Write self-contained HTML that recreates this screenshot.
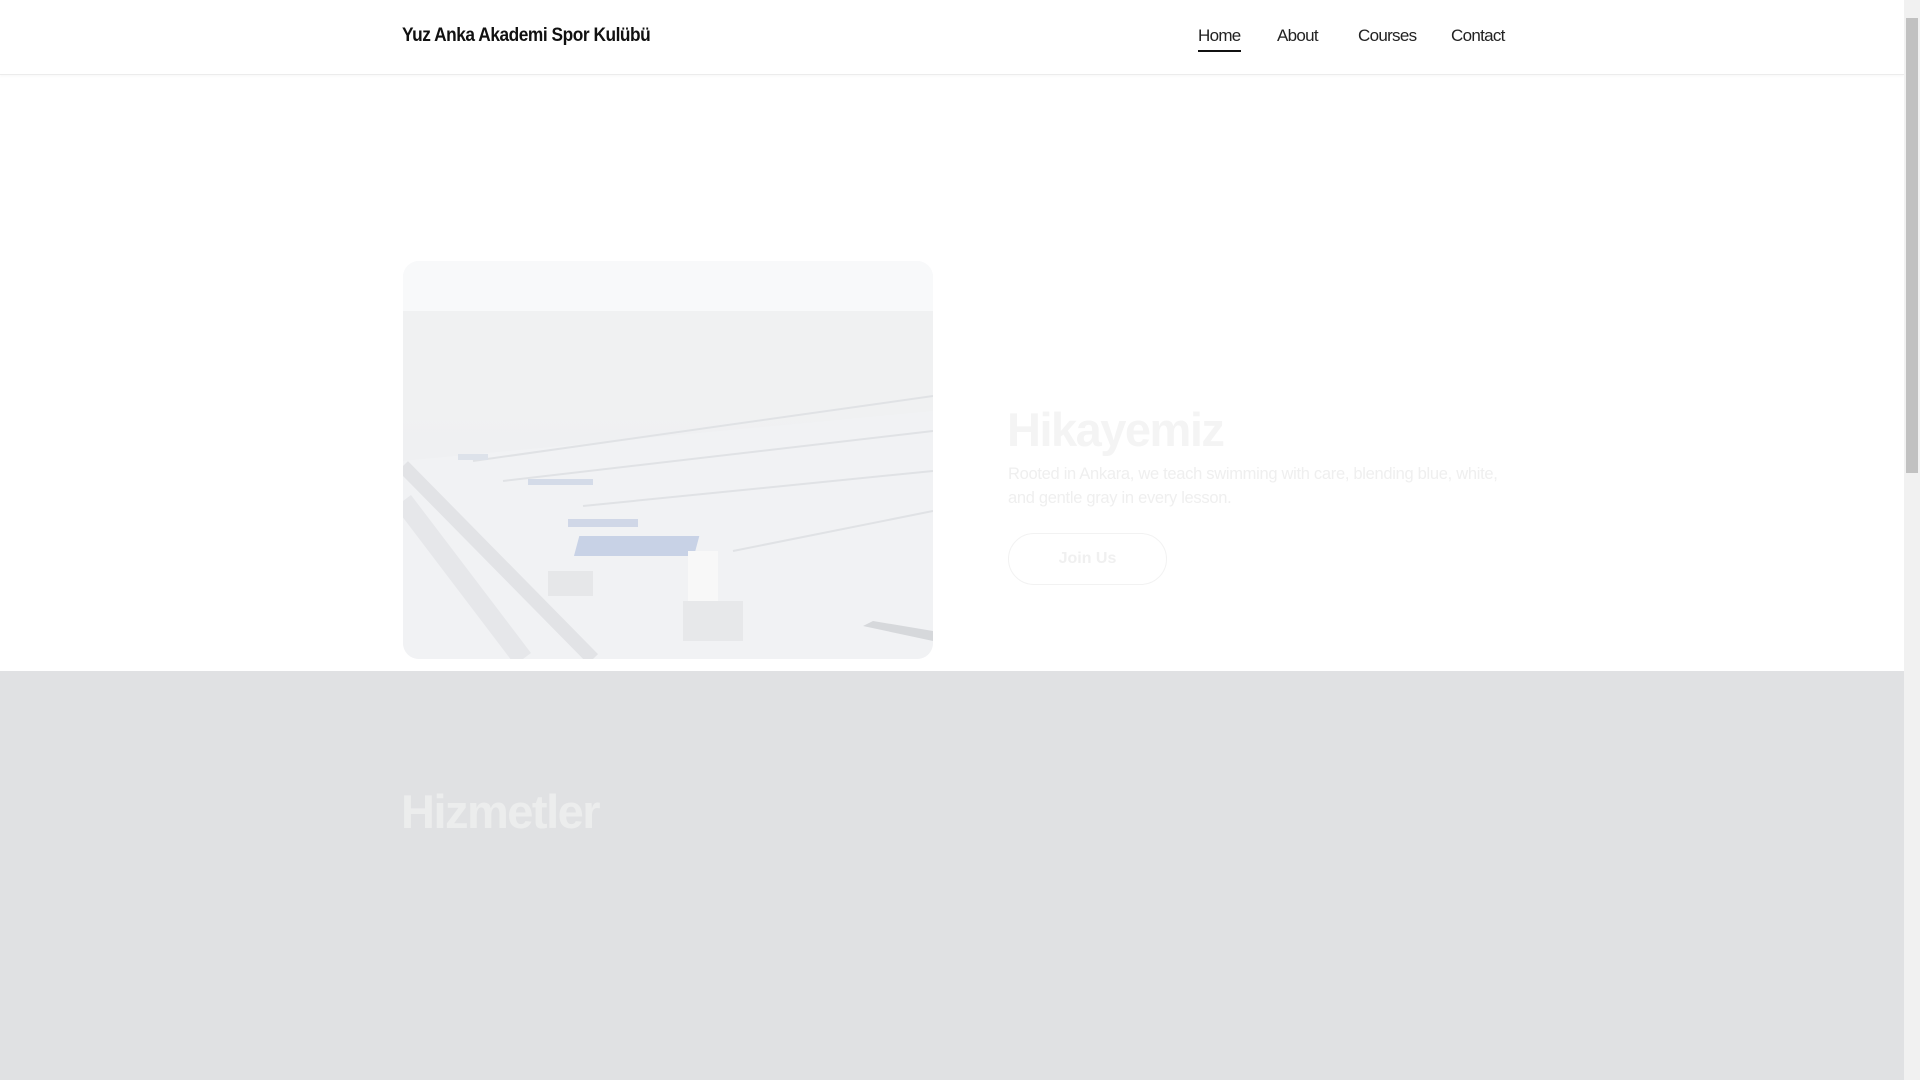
<!DOCTYPE html>
<html><head><meta charset="utf-8"><style>
*{margin:0;padding:0;box-sizing:border-box}
html,body{width:1920px;height:1080px;overflow:hidden;background:#fff;font-family:"Liberation Sans",sans-serif}
.hdr{position:absolute;left:0;top:0;width:1904px;height:75px;background:#fff;border-bottom:1px solid #ececec;box-shadow:0 1px 3px rgba(0,0,0,.04)}
.logo{position:absolute;left:402px;top:25px;font-size:19px;color:#111;letter-spacing:-0.5px;font-weight:bold;transform:scaleX(.91);transform-origin:left}
.nav a{position:absolute;top:26px;font-size:17px;color:#222;text-decoration:none;letter-spacing:-0.7px}
.home{border-bottom:2px solid #111;padding-bottom:4px}
.gray{position:absolute;left:0;top:671px;width:1904px;height:409px;background:#e0e1e3}
.img{position:absolute;left:403px;top:261px;width:530px;height:398px;border-radius:16px;overflow:hidden;background:linear-gradient(180deg,#f6f7f8 0%,#eff0f2 45%,#f2f3f5 100%)}
h2{position:absolute;font-size:47px;font-weight:bold;color:#f4f4f4;letter-spacing:-1.5px}
.p{position:absolute;left:1008px;top:462px;width:510px;font-size:16.5px;line-height:24px;color:#efefef;letter-spacing:-0.3px}
.btn{position:absolute;left:1008px;top:533px;width:159px;height:52px;border:1px solid #f2f2f2;border-radius:26px;text-align:center;line-height:50px;font-size:16px;font-weight:bold;color:#f0f0f0}
.sb{position:absolute;left:1904px;top:0;width:16px;height:1080px;background:#f1f1f1}
.th{position:absolute;left:1906px;top:18px;width:12px;height:455px;background:#c1c1c1}
</style></head><body>
<div class="hdr">
<div class="logo">Yuz Anka Akademi Spor Kulübü</div>
<div class="nav">
<a class="home" style="left:1198px">Home</a>
<a style="left:1277px">About</a>
<a style="left:1358px">Courses</a>
<a style="left:1451px">Contact</a>
</div></div>
<div class="img"><svg width="530" height="398" viewBox="0 0 530 398">
<rect x="0" y="0" width="530" height="60" fill="#f8f9fa"/>
<rect x="0" y="50" width="530" height="110" fill="#f0f1f2"/>
<path d="M0 200 L530 150 L530 398 L0 398Z" fill="#f1f2f4"/>
<path d="M0 205 L190 398" stroke="#e2e3e6" stroke-width="14"/>
<path d="M0 240 L120 398" stroke="#e6e7ea" stroke-width="20"/>
<path d="M70 200 L530 135 M100 220 L530 170 M180 245 L530 210 M330 290 L530 250" stroke="#e0e2e5" stroke-width="2"/>
<rect x="55" y="193" width="30" height="6" fill="#dde2ea"/>
<rect x="125" y="218" width="65" height="6" fill="#d4dbe8"/>
<rect x="165" y="258" width="70" height="8" fill="#d0d7e7"/>
<rect x="250" y="275" width="120" height="20" fill="#c8d2e6" transform="skewX(-15)"/>
<rect x="285" y="290" width="30" height="50" fill="#f8f8f8"/>
<rect x="280" y="340" width="60" height="40" fill="#e7e8ea"/>
<rect x="145" y="310" width="45" height="25" fill="#e6e7e9"/>
<path d="M470 360 L530 370 L530 380 L460 365Z" fill="#d6d8db"/>
</svg></div>
<h2 style="left:1007px;top:402px">Hikayemiz</h2>
<div class="p">Rooted in Ankara, we teach swimming with care, blending blue, white, and gentle gray in every lesson.</div>
<div class="btn">Join Us</div>
<div class="gray"></div>
<h2 style="left:401px;top:784px;color:#eceded">Hizmetler</h2>
<div class="sb"></div><div class="th"></div>
</body></html>
